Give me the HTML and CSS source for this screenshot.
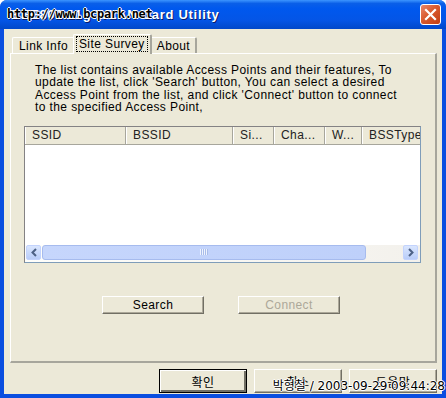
FILE: index.html
```html
<!DOCTYPE html>
<html lang="ko">
<head>
    <meta charset="UTF-8">
    <title>IEEE802.11g WLAN Card Utility</title>
    <link rel="stylesheet" href="styles.css">
</head>
<body>
    <div class="window">
        <div class="titlebar">
            <span class="title">IEEE802.11g WLAN Card Utility</span>
            <span class="title-mark">http://www.bcpark.net</span>
            <span class="close-btn">
                <svg width="13" height="13" viewBox="0 0 13 13">
                    <path d="M2 2 L11 11 M11 2 L2 11" stroke="#fff" stroke-width="2.2" stroke-linecap="square"/>
                </svg>
            </span>
        </div>
        <div class="client">
            <div class="tabs">
                <span class="tab">Link Info</span>
                <span class="tab active"><span class="focus">Site Survey</span></span>
                <span class="tab">About</span>
            </div>
            <div class="panel">
                <p class="intro">The list contains available Access Points and their features, To<br>update the list, click 'Search' button, You can select a desired<br>Access Point from the list, and click 'Connect' button to connect<br>to the specified Access Point,</p>
                <div class="list">
                    <div class="list-head">
                        <span class="col c1">SSID</span>
                        <span class="col c2">BSSID</span>
                        <span class="col c3">Si...</span>
                        <span class="col c4">Cha...</span>
                        <span class="col c5">W...</span>
                        <span class="col c6">BSSType</span>
                    </div>
                    <div class="list-body"></div>
                    <div class="hscroll">
                        <span class="arrow">
                            <svg width="8" height="9" viewBox="0 0 8 9"><path d="M6 1 L2.5 4.5 L6 8" fill="none" stroke="#4d6185" stroke-width="2"/></svg>
                        </span>
                        <span class="thumb"><span class="grip"></span></span>
                        <span class="track"></span>
                        <span class="arrow">
                            <svg width="8" height="9" viewBox="0 0 8 9"><path d="M2 1 L5.5 4.5 L2 8" fill="none" stroke="#4d6185" stroke-width="2"/></svg>
                        </span>
                    </div>
                </div>
                <div class="actions">
                    <button class="btn">Search</button>
                    <button class="btn" disabled>Connect</button>
                </div>
            </div>
            <div class="footer">
                <button class="btn big default">확인</button>
                <button class="btn big">취소</button>
                <button class="btn big">도움말</button>
            </div>
            <span class="stamp">박형철 / 2003-09-29 09:44:28</span>
        </div>
    </div>
</body>
</html>
```

FILE: styles.css
```css
body {
    margin: 0;
    padding: 0;
    background: #fff;
}

.window {
    width: 446px;
    height: 398px;
    display: flex;
    flex-direction: column;
    background: #0a4ee0;
    border-radius: 7px 7px 0 0;
    box-sizing: border-box;
    padding: 0 4px 4px 4px;
    font-family: "Liberation Sans", "Noto Sans CJK KR", sans-serif;
    font-size: 12px;
    letter-spacing: 0.4px;
    color: #000;
}

.titlebar {
    position: relative;
    height: 29px;
    margin: 0 -4px;
    padding: 0 5px 0 7px;
    display: flex;
    align-items: center;
    border-radius: 7px 7px 0 0;
    background: linear-gradient(#3d95ff 0%, #0a5fe8 12%, #0058ee 30%, #0455e6 70%, #0148c9 100%);
}

.title {
    color: #fff;
    font-weight: bold;
    font-size: 13px;
    letter-spacing: 0.7px;
    text-shadow: 1px 1px 0 #0a1d6b;
}

.title-mark {
    position: absolute;
    left: 7px;
    top: 7px;
    font-family: "DejaVu Sans Mono", monospace;
    font-size: 12px;
    font-weight: bold;
    letter-spacing: -0.3px;
    color: #000;
    text-shadow: 1px 0 0 #fff, -1px 0 0 #fff, 0 1px 0 #fff, 0 -1px 0 #fff;
}

.close-btn {
    margin-left: auto;
    width: 21px;
    height: 21px;
    box-sizing: border-box;
    border: 1px solid #fff;
    border-radius: 3px;
    background: linear-gradient(135deg, #e9866b 0%, #d95a2e 45%, #c13d12 100%);
    display: flex;
    align-items: center;
    justify-content: center;
}

.client {
    position: relative;
    flex: 1;
    background: #ece9d8;
    display: flex;
    flex-direction: column;
    padding: 4px 5px 0 6px;
}

.tabs {
    display: flex;
    align-items: flex-end;
    height: 21px;
    padding-left: 2px;
}

.tab {
    height: 17px;
    box-sizing: border-box;
    padding: 1px 5px 0 6px;
    border-top: 1px solid #fff;
    border-left: 1px solid #fff;
    border-right: 2px solid #a7a69c;
    border-radius: 2px 2px 0 0;
    line-height: 15px;
    white-space: nowrap;
}

.tab.active {
    height: 20px;
    margin: 0 -2px;
    padding: 2px 3px 0 3px;
    position: relative;
    z-index: 1;
    background: #ece9d8;
}

.focus {
    outline: 1px dotted #000;
    padding: 0 2px;
}

.panel {
    flex: 1;
    margin-top: -1px;
    border-top: 1px solid #fff;
    border-left: 1px solid #fff;
    border-right: 2px solid #a7a69c;
    border-bottom: 2px solid #a7a69c;
    display: flex;
    flex-direction: column;
    padding: 0 13px;
    max-height: 310px;
    box-sizing: border-box;
}

.intro {
    margin: 10px 0 0 11px;
    line-height: 12.4px;
    white-space: nowrap;
}

.list {
    margin-top: 12px;
    height: 137px;
    width: 397px;
    box-sizing: border-box;
    border: 1px solid #7f9db9;
    border-top-color: #848284;
    border-left-color: #848284;
    background: #fff;
    display: flex;
    flex-direction: column;
    flex-shrink: 0;
}

.list-head {
    display: flex;
    height: 17px;
    overflow: hidden;
    background: #ece9d8;
    border-bottom: 1px solid #a7a69c;
    flex-shrink: 0;
}

.col {
    box-sizing: border-box;
    padding: 1px 0 0 6px;
    border-left: 1px solid #fff;
    border-right: 1px solid #a7a69c;
    line-height: 15px;
    white-space: nowrap;
    overflow: hidden;
    flex-shrink: 0;
    color: #222;
}

.c1 { width: 101px; }
.c2 { width: 107px; }
.c3 { width: 41px; }
.c4 { width: 51px; }
.c5 { width: 37px; }
.c6 { width: 60px; border-right: none; }

.list-body {
    flex: 1;
}

.hscroll {
    height: 16px;
    display: flex;
    gap: 1px;
    padding: 0 2px 1px 1px;
    background: linear-gradient(90deg, #fefefb, #f3f1ec);
}

.arrow {
    width: 15px;
    height: 15px;
    flex-shrink: 0;
    box-sizing: border-box;
    border: 1px solid #c3d3fd;
    border-radius: 2px;
    background: linear-gradient(#dae6fe, #b9cdf9);
    display: flex;
    align-items: center;
    justify-content: center;
}

.thumb {
    width: 324px;
    height: 15px;
    flex-shrink: 0;
    box-sizing: border-box;
    border: 1px solid #a6bbee;
    border-radius: 3px;
    background: linear-gradient(90deg, #c6d6fc, #bed0fa);
    display: flex;
    align-items: center;
    justify-content: center;
}

.grip {
    width: 8px;
    height: 6px;
    background: repeating-linear-gradient(90deg, #eef3fe 0 1px, #a8bce9 1px 2px);
}

.track {
    flex: 1;
}

.actions {
    display: flex;
    gap: 34px;
    margin-top: 33px;
    padding-left: 78px;
}

.btn {
    font-family: "Liberation Sans", "Noto Sans CJK KR", sans-serif;
    font-size: 12px;
    width: 102px;
    height: 18px;
    padding: 0;
    background: #ece9d8;
    border: 1px solid;
    border-color: #fff #716f64 #716f64 #fff;
    box-shadow: inset -1px -1px 0 #aca899;
    color: #000;
    letter-spacing: 0.4px;
}

.btn:disabled {
    color: #aca899;
}

.footer {
    display: flex;
    gap: 7px;
    justify-content: flex-end;
    padding: 6px 0 0 0;
}

.btn.big {
    width: 88px;
    height: 24px;
}

.btn.default {
    border: 1px solid #000;
    box-shadow: inset 1px 1px 0 #fff, inset -2px -2px 0 #716f64;
}

.stamp {
    position: absolute;
    right: -3px;
    bottom: 1px;
    font-family: "DejaVu Sans", "Noto Sans CJK KR", sans-serif;
    font-size: 12px;
    letter-spacing: 0;
    color: #000;
    text-shadow: 1px 0 0 #fff, -1px 0 0 #fff, 0 1px 0 #fff, 0 -1px 0 #fff;
}
```
